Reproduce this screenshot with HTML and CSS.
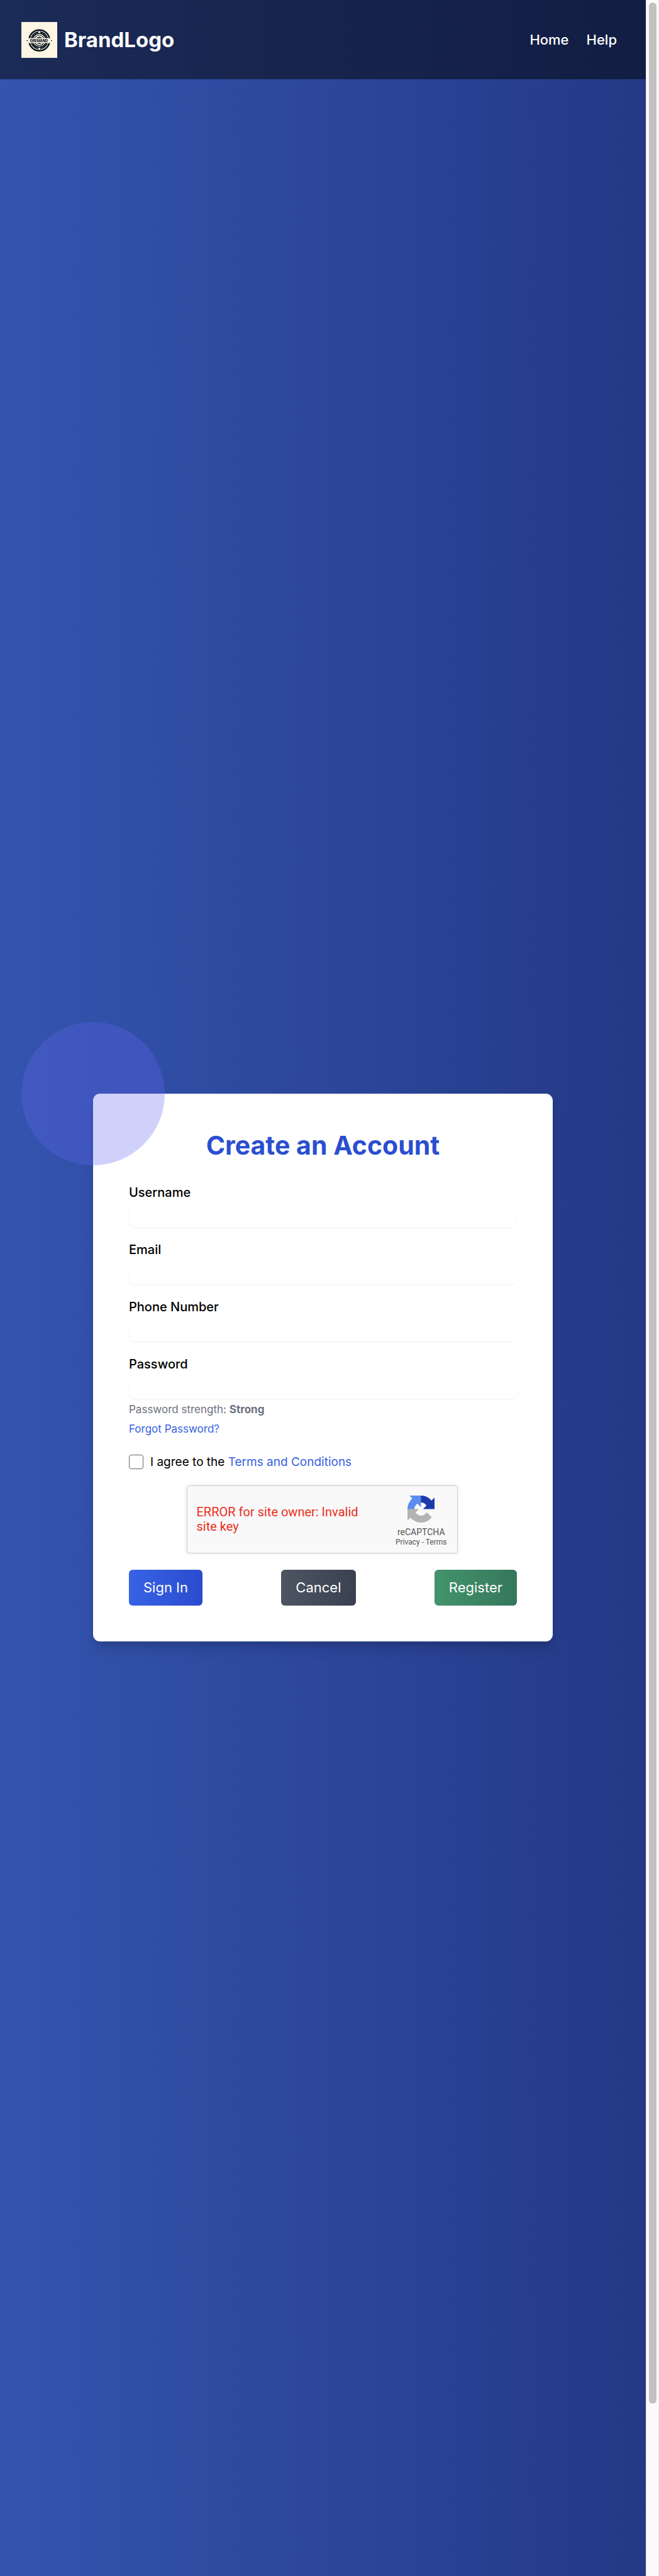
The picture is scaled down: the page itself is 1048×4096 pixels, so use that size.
FILE: index.html
```html
<!DOCTYPE html>
<html lang="en">
<head>
<meta charset="utf-8">
<meta name="viewport" content="width=device-width, initial-scale=1">
<title>Create an Account</title>
<link rel="stylesheet" href="styles.css">
</head>
<body>
<div class="page">
  <header class="header">
    <div class="brand">
      <svg class="brand-mark" viewBox="0 0 80 80" aria-hidden="true">
        <rect width="80" height="80" fill="#fdf6e3"/>
        <g fill="none" stroke="#07131f">
          <circle cx="40" cy="41" r="23" stroke-width="3.6"/>
          <circle cx="40" cy="41" r="17" stroke-width="5.6"/>
          <circle cx="40" cy="41" r="11.5" stroke-width="1.6"/>
        </g>
        <circle cx="40" cy="41" r="17" fill="none" stroke="#fdf6e3" stroke-width="1.4" stroke-dasharray="1.4 3.4"/>
        <circle cx="40" cy="41" r="8" fill="#07131f"/>
        <circle cx="40" cy="22.500" r="3" fill="#fdf6e3" stroke="#07131f"/>
        <circle cx="40" cy="60" r="3" fill="#fdf6e3" stroke="#07131f"/>
        <rect x="12" y="36" width="56" height="11" fill="#fdf6e3"/>
        <circle cx="13" cy="41.500" r="1.200" fill="#07131f"/>
        <circle cx="67" cy="41.500" r="1.200" fill="#07131f"/>
        <text class="brand-mark-text" x="39" y="44.500" text-anchor="middle">GRENAND</text>
      </svg>
      <span class="brand-name">BrandLogo</span>
    </div>
    <nav class="nav">
      <a href="#home">Home</a>
      <a href="#help">Help</a>
    </nav>
  </header>

  <main class="main">
    <section class="card">
      <div class="card-circle"></div>
      <h1 class="title">Create an Account</h1>
      <form class="form">
        <div class="fields">
          <div class="field">
            <label for="username">Username</label>
            <input id="username" type="text">
          </div>
          <div class="field">
            <label for="email">Email</label>
            <input id="email" type="email">
          </div>
          <div class="field">
            <label for="phone">Phone Number</label>
            <input id="phone" type="tel">
          </div>
          <div class="field">
            <label for="password">Password</label>
            <input id="password" type="password">
          </div>
        </div>
        <p class="strength">Password strength: <strong>Strong</strong></p>
        <a class="forgot" href="#forgot">Forgot Password?</a>
        <div class="agree">
          <input id="agree" type="checkbox">
          <label for="agree">I agree to the <a href="#terms">Terms and Conditions</a></label>
        </div>
        <div class="captcha-wrap">
          <div class="captcha">
            <p class="captcha-error">ERROR for site owner: Invalid site key</p>
            <div class="captcha-badge">
              <svg class="captcha-logo" viewBox="0 0 64 64" aria-hidden="true">
                <path fill="#1c3aa9" d="M64 31.955l-.016-1.37V4.687l-7.16 7.16C50.964 4.674 42.033.093 32.03.093c-10.4 0-19.65 4.96-25.48 12.64l11.736 11.86a15.55 15.55 0 0 1 4.754-5.334c2.05-1.6 4.953-2.906 8.968-2.906.485 0 .86.057 1.135.163 4.976.393 9.288 3.14 11.828 7.124l-8.307 8.307L64 31.953"/>
                <path fill="#5b8def" d="M31.862.094l-1.37.016H4.594l7.16 7.16C4.58 13.131 0 22.06 0 32.062c0 10.404 4.96 19.65 12.64 25.48L24.5 45.806a15.55 15.55 0 0 1-5.334-4.753c-1.6-2.05-2.905-4.955-2.905-8.97 0-.485.057-.86.162-1.135.394-4.975 3.14-9.287 7.125-11.827l8.307 8.307L31.86.095"/>
                <path fill="#b3b3b3" d="M.001 32.045l.016 1.37v25.898l7.16-7.16c5.86 7.173 14.79 11.754 24.792 11.754 10.405 0 19.65-4.96 25.48-12.64L45.714 39.407a15.55 15.55 0 0 1-4.754 5.334c-2.05 1.6-4.954 2.905-8.968 2.905-.485 0-.86-.057-1.135-.163-4.975-.393-9.287-3.14-11.827-7.124l8.307-8.307L0 32.047"/>
              </svg>
              <div class="captcha-name">reCAPTCHA</div>
              <div class="captcha-links"><a href="#privacy">Privacy</a> - <a href="#captcha-terms">Terms</a></div>
            </div>
          </div>
        </div>
        <div class="actions">
          <button class="btn btn-blue" type="button">Sign In</button>
          <button class="btn btn-gray" type="button">Cancel</button>
          <button class="btn btn-green" type="submit">Register</button>
        </div>
      </form>
    </section>
  </main>
</div>
<div class="scrollbar" aria-hidden="true"><div class="scrollbar-thumb"></div></div>
</body>
</html>
```
FILE: styles.css
```css
*,
*::before,
*::after {
  box-sizing: border-box;
}

body {
  display: flex;
  height: 100vh;
  margin: 0;
  overflow: hidden;
  font-family: Inter, "Liberation Sans", sans-serif;
  font-size: 20px;
  line-height: 29px;
  color: #000;
}

h1,
p {
  margin: 0;
}

a {
  color: inherit;
  text-decoration: none;
}

.page {
  display: flex;
  flex: 1;
  flex-direction: column;
  min-width: 0;
  overflow: hidden;
  background: linear-gradient(to right, #3454af, #243986);
}

/* Header */
.header {
  display: flex;
  flex-shrink: 0;
  align-items: center;
  justify-content: space-between;
  height: 126px;
  padding: 0 46px 0 34px;
  background: linear-gradient(to right, #1b2b57, #121d43);
  color: #fff;
}

.brand {
  display: flex;
  align-items: center;
  gap: 11px;
}

.brand-mark {
  width: 57px;
  height: 57px;
}

.brand-mark-text {
  font-size: 8px;
  font-weight: 800;
  fill: #07131f;
}

.brand-name {
  font-size: 33px;
  font-weight: 700;
  line-height: 46px;
}

.nav {
  display: flex;
  gap: 28px;
  font-size: 22px;
  font-weight: 500;
  line-height: 34px;
}

/* Card */
.main {
  display: flex;
  flex-shrink: 0;
  align-items: center;
  justify-content: center;
  min-height: 100vh;
}

.card {
  position: relative;
  width: 100%;
  max-width: 731px;
  padding: 57px;
  border-radius: 11px;
  background: #fff;
  box-shadow: 0 14px 21px -4px rgba(0, 0, 0, 0.15), 0 6px 9px -3px rgba(0, 0, 0, 0.08);
}

.card-circle {
  position: absolute;
  top: -114px;
  left: -114px;
  width: 228px;
  height: 228px;
  border-radius: 50%;
  background: #6366f1;
  opacity: 0.3;
  pointer-events: none;
}

.title {
  margin-bottom: 35px;
  font-size: 41px;
  font-weight: 700;
  line-height: 51px;
  text-align: center;
  color: #2b4ed0;
}

/* Form */
.form {
  display: flex;
  flex-direction: column;
}

.fields {
  display: grid;
  gap: 22px;
}

.field {
  display: flex;
  flex-direction: column;
  gap: 6px;
}

.field label {
  font-weight: 500;
}

.field input {
  width: 100%;
  height: 34px;
  padding: 0 12px;
  border: 0;
  border-radius: 9px;
  background: #fff;
  box-shadow: 0 1px 3px rgba(0, 0, 0, 0.06);
  font: inherit;
}

.strength,
.forgot {
  font-size: 17px;
  line-height: 23px;
}

.strength {
  margin-top: 6px;
  color: #6b7280;
}

.forgot {
  align-self: flex-start;
  margin-top: 8px;
  color: #3661e3;
}

.agree {
  display: flex;
  align-items: center;
  gap: 11px;
  margin-top: 26px;
  font-size: 19px;
}

.agree a {
  color: #3661e3;
}

.agree input {
  width: 23px;
  height: 23px;
  margin: 0;
  appearance: none;
  border: 1px solid #666;
  border-radius: 4px;
  background: #fff;
}

/* Captcha */
.captcha-wrap {
  align-self: center;
  width: 434px;
  height: 111px;
  margin: 23px 0;
}

.captcha {
  display: flex;
  justify-content: space-between;
  width: 431px;
  height: 108px;
  padding: 0 16px 0 15px;
  border: 1px solid #cdcdcd;
  border-radius: 4px;
  background: #f9f9f9;
  box-shadow: 0 0 6px 1px rgba(0, 0, 0, 0.08);
  font-family: Roboto, "Liberation Sans", sans-serif;
}

.captcha-error {
  align-self: center;
  width: 270px;
  font-size: 20px;
  line-height: 23px;
  color: #ec2e20;
}

.captcha-badge {
  display: flex;
  flex-direction: column;
  align-items: center;
  padding-top: 15px;
  color: #555;
}

.captcha-logo {
  width: 43px;
  height: 43px;
}

.captcha-name {
  margin-top: 7px;
  font-size: 14px;
  line-height: 17px;
}

.captcha-links {
  font-size: 12px;
  line-height: 14px;
}

/* Buttons */
.actions {
  display: flex;
  justify-content: space-between;
}

.btn {
  padding: 11px 23px;
  border: 0;
  border-radius: 6px;
  font: inherit;
  font-size: 22px;
  font-weight: 400;
  line-height: 35px;
  color: #fff;
}

.btn-blue {
  background: linear-gradient(to right, #3863e6, #2a4bcd);
}

.btn-gray {
  background: linear-gradient(to right, #4d5462, #3a4150);
}

.btn-green {
  background: linear-gradient(to right, #43946c, #35775b);
}

/* Scroll track */
.scrollbar {
  flex: 0 0 21px;
  padding: 4px 3px 0 4px;
  border: solid #e9e9e9;
  border-width: 0 1px;
  background: #fafafa;
}

.scrollbar-thumb {
  width: 12px;
  height: 93.3%;
  border-radius: 6px;
  background: #c1c1c1;
}
```
